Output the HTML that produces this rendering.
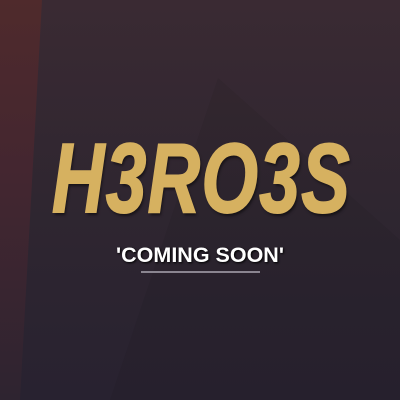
<!DOCTYPE html>
<html><head><style>
html,body{margin:0;padding:0}
body{width:400px;height:400px;overflow:hidden;position:relative;
background:linear-gradient(180deg,#3a2a33 0%,#2f2630 50%,#282230 100%);font-family:"Liberation Sans",sans-serif}
.red{position:absolute;left:0;top:0;width:60px;height:400px;
background:linear-gradient(180deg,#4f2a2c 0%,#432630 45%,#2e2430 100%);
clip-path:polygon(0 0,42px 0,20px 400px,0 400px)}
.tri{position:absolute;left:0;top:0;width:400px;height:400px;background:rgba(20,10,20,0.07);
clip-path:polygon(218px 78px,400px 240px,400px 400px,110px 400px)}
.t{position:absolute;left:0;width:400px;text-align:center}
.h{top:122px;font-size:98px;font-weight:900;font-style:italic;color:#d6b160;
transform:scaleX(0.74);letter-spacing:2px;text-shadow:2px 3px 3px rgba(0,0,0,.5);-webkit-text-stroke:2px #d6b160}
.c{top:243px;font-size:21.5px;font-weight:bold;color:#fff;text-shadow:1px 1px 2px #000}
.l{position:absolute;left:141px;top:271px;width:119px;height:2px;background:#8a8590}
</style></head><body>
<div class="red"></div><div class="tri"></div>
<div class="t h">H3RO3S</div>
<div class="t c">'COMING SOON'</div>
<div class="l"></div>
</body></html>
